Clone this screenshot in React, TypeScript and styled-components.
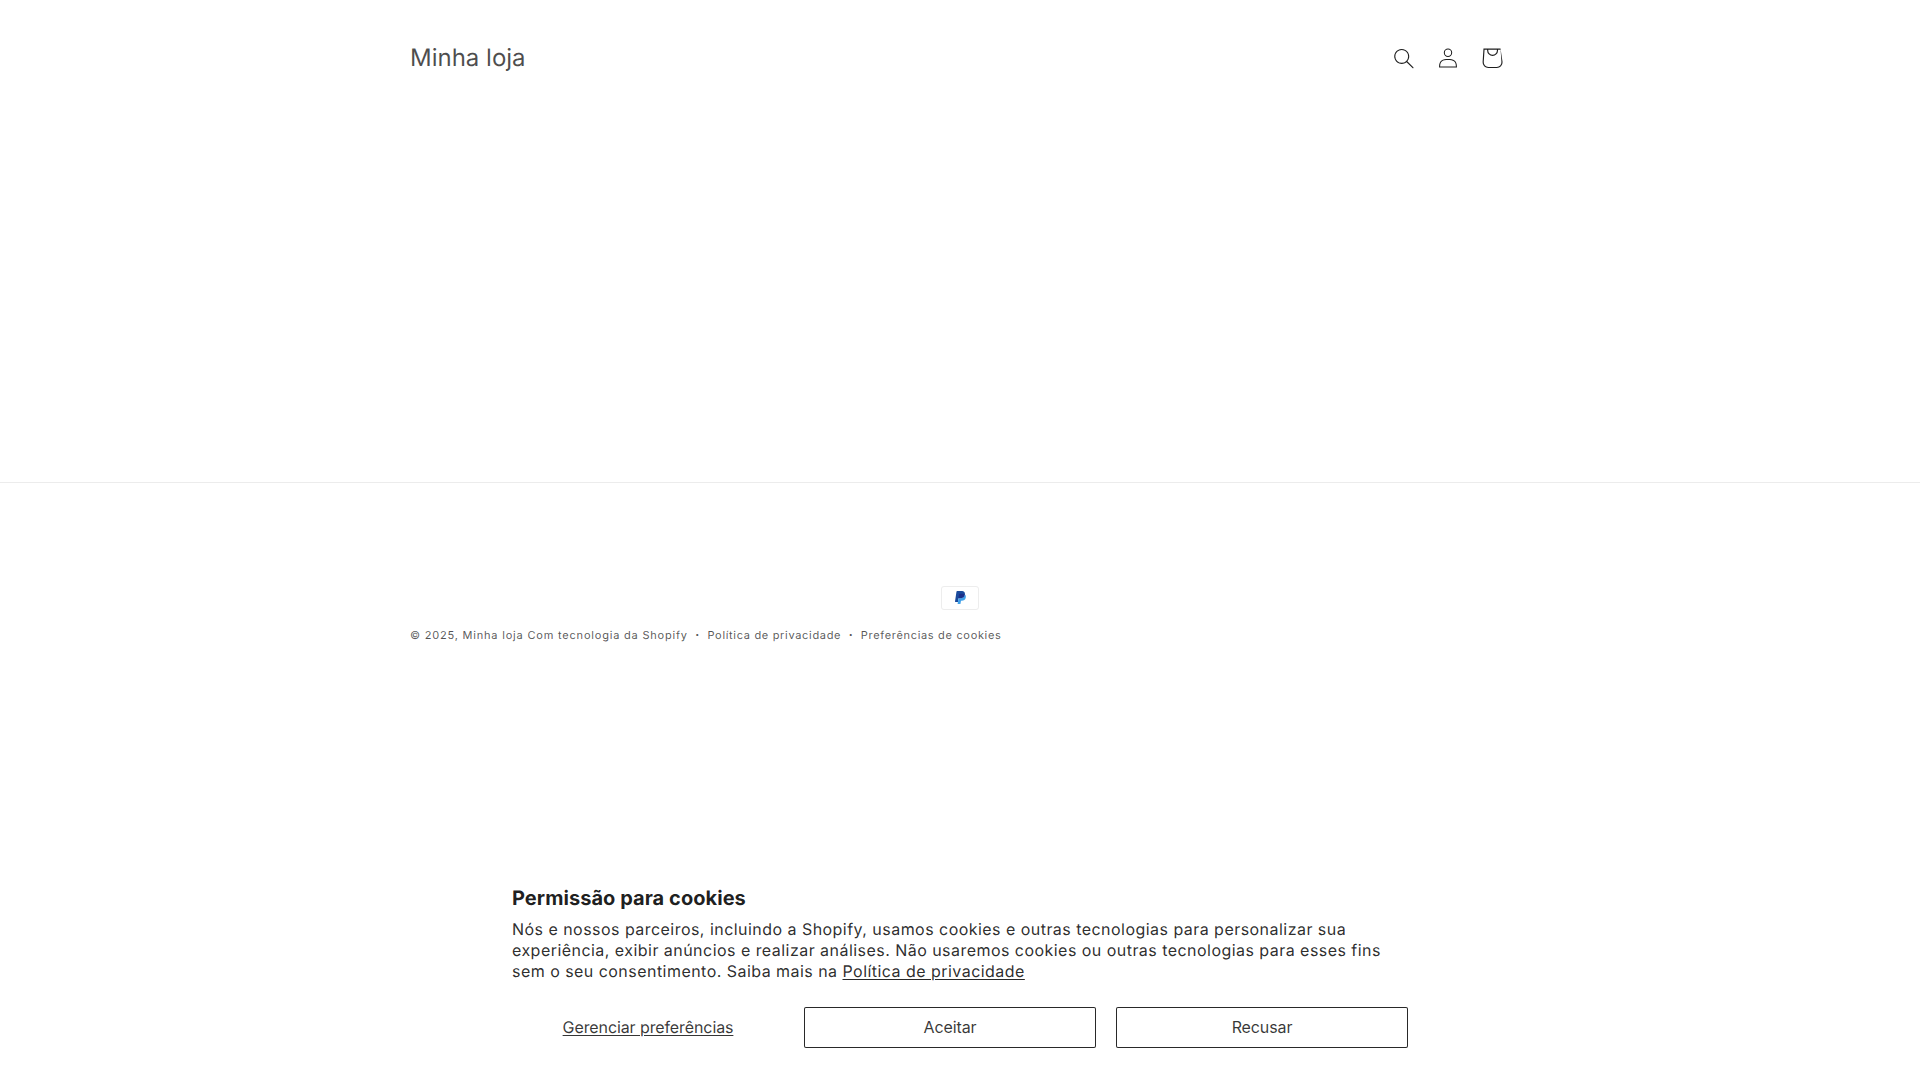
import { createGlobalStyle, styled } from "styled-components";

const GlobalStyle = createGlobalStyle`
  html, body {
    margin: 0;
    padding: 0;
    background: #fff;
    font-family: Inter, "Liberation Sans", sans-serif;
    color: rgba(18, 18, 18, 0.75);
    text-rendering: geometricPrecision;
  }
  * {
    box-sizing: border-box;
  }
`;

const Page = styled.div`
  min-height: 1080px;
`;

const Header = styled.header`
  max-width: 1200px;
  height: 116px;
  margin: 0 auto;
  padding: 0 50px;
  display: flex;
  align-items: center;
  justify-content: space-between;
`;

const Logo = styled.a`
  font-size: 24px;
  letter-spacing: 0;
  line-height: 1;
  color: rgba(18, 18, 18, 0.75);
`;

const Icons = styled.div`
  display: flex;
  margin-right: -4px;
`;

const IconButton = styled.a`
  width: 44px;
  height: 44px;
  display: flex;
  align-items: center;
  justify-content: center;
  color: rgba(18, 18, 18, 0.95);
  svg {
    flex-shrink: 0;
    fill: currentColor;
  }
`;

const Main = styled.main`
  height: 366px;
`;

const Footer = styled.footer`
  border-top: 1px solid rgba(18, 18, 18, 0.08);
  padding-top: 103px;
`;

const FooterInner = styled.div`
  max-width: 1200px;
  margin: 0 auto;
  padding: 0 50px;
`;

const Payment = styled.div`
  display: flex;
  justify-content: center;
  height: 24px;
`;

const FooterLine = styled.div`
  margin-top: 15px;
  display: flex;
  align-items: center;
  font-size: 11px;
  line-height: 20px;
  letter-spacing: 0.8px;
  color: rgba(18, 18, 18, 0.72);
`;

const Policy = styled.span`
  display: flex;
  align-items: center;
  letter-spacing: 0.68px;
  &::before {
    content: "•";
    font-size: 7px;
    margin: 0 7.5px;
  }
`;

const Banner = styled.section`
  position: fixed;
  left: 480px;
  bottom: 0;
  width: 960px;
  padding: 32px;
  background: #fff;
`;

const BannerTitle = styled.h2`
  margin: 0 0 8px;
  font-size: 20px;
  font-weight: 700;
  line-height: 24px;
  letter-spacing: 0.05px;
  color: rgba(18, 18, 18, 0.95);
`;

const BannerText = styled.p`
  margin: 0;
  padding-top: 1px;
  font-size: 16px;
  line-height: 21px;
  letter-spacing: 0.46px;
  color: rgba(18, 18, 18, 0.9);
  a {
    color: inherit;
    text-decoration: underline;
    text-underline-offset: 2px;
  }
`;

const Actions = styled.div`
  margin-top: 25px;
  display: grid;
  grid-template-columns: 272px 292px 292px;
  column-gap: 20px;
`;

const ManageLink = styled.a`
  height: 41px;
  padding-bottom: 2px;
  display: flex;
  align-items: center;
  justify-content: center;
  font-size: 16px;
  letter-spacing: -0.1px;
  text-decoration: underline;
  text-underline-offset: 2px;
  color: rgba(18, 18, 18, 0.85);
`;

const ActionButton = styled.button`
  height: 41px;
  padding: 0 0 2px;
  border: 1px solid rgba(18, 18, 18, 0.9);
  border-radius: 2px;
  background: #fff;
  font-family: inherit;
  font-size: 16px;
  letter-spacing: -0.1px;
  color: rgba(18, 18, 18, 0.85);
`;

export default function App() {
  return (
    <Page>
      <GlobalStyle />
      <Header>
        <Logo>Minha loja</Logo>
        <Icons>
          <IconButton>
            <svg width="20" height="21" viewBox="0 0 18 19">
              <path fillRule="evenodd" d="M11.03 11.68A5.784 5.784 0 1 1 2.85 3.5a5.784 5.784 0 0 1 8.18 8.18Zm.26 1.12a6.78 6.78 0 1 1 .72-.7l5.4 5.4a.5.5 0 1 1-.71.7z" />
            </svg>
          </IconButton>
          <IconButton>
            <svg width="20" height="20" viewBox="0 0 18 19">
              <path fillRule="evenodd" d="M6 4.5a3 3 0 1 1 6 0 3 3 0 0 1-6 0m3-4a4 4 0 1 0 0 8 4 4 0 0 0 0-8m5.58 12.15c1.12.82 1.83 2.24 1.91 4.85H1.51c.08-2.6.79-4.03 1.9-4.85C4.66 11.75 6.5 11.5 9 11.5s4.35.26 5.58 1.15M9 10.5c-2.5 0-4.65.24-6.17 1.35C1.27 12.98.5 14.93.5 18v.5h17V18c0-3.07-.77-5.02-2.33-6.15-1.52-1.1-3.67-1.35-6.17-1.35" />
            </svg>
          </IconButton>
          <IconButton>
            <svg width="46" height="46" viewBox="0 0 40 40">
              <path fillRule="evenodd" d="m15.75 11.8h-3.16l-.77 11.6a5 5 0 0 0 4.99 5.34h7.38a5 5 0 0 0 4.99-5.33L27.4 11.8zm0 1h-2.22l-.71 10.67a4 4 0 0 0 3.99 4.27h7.38a4 4 0 0 0 4-4.27l-.72-10.67h-2.22v.63a4.75 4.75 0 1 1-9.5 0zm8.5 0h-7.5v.63a3.75 3.75 0 1 0 7.5 0z" />
            </svg>
          </IconButton>
        </Icons>
      </Header>
      <Main />
      <Footer>
        <FooterInner>
          <Payment>
            <svg width="38" height="24" viewBox="0 0 38 24" role="img" aria-label="PayPal">
              <path opacity=".07" d="M35 0H3C1.3 0 0 1.3 0 3v18c0 1.7 1.4 3 3 3h32c1.7 0 3-1.3 3-3V3c0-1.7-1.4-3-3-3z" />
              <path fill="#fff" d="M35 1c1.1 0 2 .9 2 2v18c0 1.1-.9 2-2 2H3c-1.1 0-2-.9-2-2V3c0-1.1.9-2 2-2h32" />
              <path fill="#1a4a9c" d="M23.9 8.3c.2-1 0-1.7-.6-2.3-.6-.7-1.7-1-3.1-1h-4.1c-.3 0-.5.2-.6.5L14 15.6c0 .2.1.4.3.4H17l.4-3.4 1.8-2.2 4.7-2.1z" />
              <path fill="#3fa0e8" d="M23.9 8.3l-.2.2c-.5 2.8-2.2 3.8-4.6 3.8H18c-.3 0-.5.2-.6.5l-.6 3.9-.2 1c0 .2.1.4.3.4H19c.3 0 .5-.2.5-.4v-.1l.4-2.4v-.1c0-.2.3-.4.5-.4h.3c2.1 0 3.7-.8 4.1-3.2.2-1 .1-1.8-.4-2.4-.1-.5-.3-.6-.5-.7z" />
              <path fill="#1b2f8a" d="M23.3 8.1c-.1-.1-.2-.1-.3-.1-.1 0-.2 0-.3-.1-.3-.1-.7-.1-1.1-.1h-3c-.1 0-.2 0-.2.1-.2.1-.3.2-.3.4l-.7 4.4v.1c0-.3.3-.5.6-.5h1.3c2.5 0 4.1-1 4.6-3.8v-.2c-.1-.1-.3-.2-.5-.2h-.1z" />
            </svg>
          </Payment>
          <FooterLine>
            <span>© 2025, Minha loja Com tecnologia da Shopify</span>
            <Policy>Política de privacidade</Policy>
            <Policy>Preferências de cookies</Policy>
          </FooterLine>
        </FooterInner>
      </Footer>
      <Banner>
        <BannerTitle>Permissão para cookies</BannerTitle>
        <BannerText>
          Nós e nossos parceiros, incluindo a Shopify, usamos cookies e outras tecnologias para personalizar sua
          experiência, exibir anúncios e realizar análises. Não usaremos cookies ou outras tecnologias para esses fins
          sem o seu consentimento. Saiba mais na <a>Política de privacidade</a>
        </BannerText>
        <Actions>
          <ManageLink>Gerenciar preferências</ManageLink>
          <ActionButton>Aceitar</ActionButton>
          <ActionButton>Recusar</ActionButton>
        </Actions>
      </Banner>
    </Page>
  );
}
